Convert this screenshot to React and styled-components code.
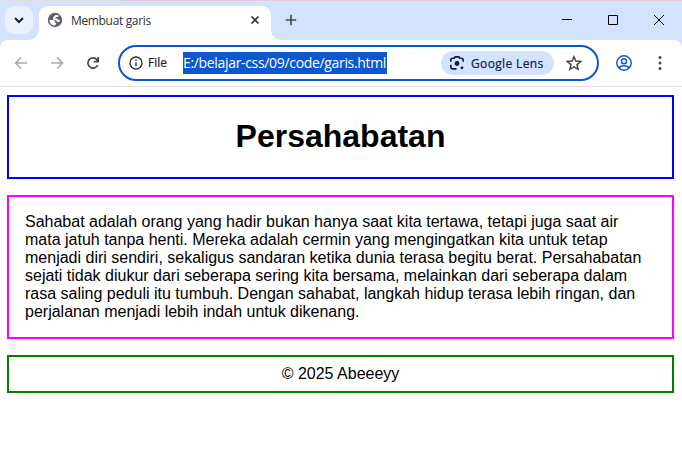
import React from "react";
import styled, { createGlobalStyle } from "styled-components";

const GlobalStyle = createGlobalStyle`
  * { box-sizing: border-box; }
  html, body { margin: 0; background: #fff; overflow: hidden; }
`;

const Window = styled.div`
  width: 682px;
  height: 471px;
  display: flex;
  flex-direction: column;
  background: #fff;
  font-family: "Open Sans", "Noto Sans", sans-serif;
`;

const TopEdge = styled.div`
  height: 1px;
  flex: none;
  background: linear-gradient(90deg, #dedfe3 120px, #e7c9df 120px);
`;

const TabStrip = styled.div`
  height: 39px;
  flex: none;
  display: flex;
  padding: 5px 0 0 5px;
  background: #d3e3fd;
`;

const TabSearch = styled.div`
  width: 28px;
  height: 28px;
  border-radius: 9px;
  background: #e9f1fe;
  display: flex;
  svg { margin: auto; }
`;

const Tab = styled.div`
  position: relative;
  width: 232px;
  height: 34px;
  margin-left: 6px;
  padding: 0 11px 6px 8px;
  display: flex;
  align-items: center;
  background: #fff;
  border-radius: 9px 9px 0 0;
  &::before, &::after {
    content: "";
    position: absolute;
    bottom: 0;
    width: 10px;
    height: 10px;
  }
  &::before {
    left: -10px;
    background: radial-gradient(circle at 0 0, transparent 9.5px, #fff 10px);
  }
  &::after {
    right: -10px;
    background: radial-gradient(circle at 100% 0, transparent 9.5px, #fff 10px);
  }
`;

const TabTitle = styled.span`
  flex: 1;
  margin-left: 8px;
  padding-top: 1px;
  font-size: 12px;
  line-height: 16px;
  letter-spacing: -0.34px;
  color: #303236;
  white-space: nowrap;
`;

const NewTab = styled.div`
  width: 28px;
  height: 28px;
  margin-left: 6px;
  display: flex;
  svg { margin: auto; }
`;

const WindowControls = styled.div`
  margin-left: auto;
  height: 28px;
  display: flex;
`;

const WindowControl = styled.div`
  width: 46px;
  display: flex;
  svg { margin: auto; }
`;

const ToolbarBack = styled.div`
  height: 47px;
  flex: none;
  background: linear-gradient(#d3e3fd 20px, #fff 20px);
`;

const Toolbar = styled.div`
  height: 47px;
  display: flex;
  align-items: center;
  background: #fff;
  border-bottom: 1px solid #dfe1e5;
  border-radius: 8px 8px 0 0;
`;

const NavButton = styled.div`
  width: 36px;
  height: 28px;
  display: flex;
  color: ${(p) => (p.$disabled ? "#a8a9aa" : "#474747")};
  svg { margin: auto; }
  &:first-child { margin-left: 3px; }
`;

const AddressBar = styled.div`
  width: 481px;
  height: 36px;
  margin-left: 7px;
  padding: 0 0 0 9px;
  display: flex;
  align-items: center;
  border: 2px solid #0b57d0;
  border-radius: 18px;
`;

const Scheme = styled.span`
  width: 35px;
  margin-left: 5px;
  font-size: 12px;
  line-height: 16px;
  font-weight: 500;
  -webkit-text-stroke: 0.2px #1f1f1f;
  color: #1f1f1f;
`;

const Url = styled.span`
  height: 22px;
  line-height: 22px;
  background: #0b57d0;
  color: #fff;
  font-size: 14px;
  letter-spacing: -0.33px;
  width: 204px;
  white-space: nowrap;
`;

const LensChip = styled.div`
  width: 113px;
  height: 24px;
  margin-left: auto;
  padding-left: 8px;
  display: flex;
  align-items: center;
  gap: 6px;
  background: #d3e3fd;
  border-radius: 12px;
  color: #041e49;
  font-size: 12px;
  font-weight: 500;
  -webkit-text-stroke: 0.2px #041e49;
  letter-spacing: 0.36px;
  white-space: nowrap;
`;

const StarButton = styled.div`
  width: 24px;
  margin-left: 8px;
  margin-right: 11px;
  display: flex;
  svg { margin: auto; }
`;

const ProfileButton = styled.div`
  width: 36px;
  margin-left: 7px;
  display: flex;
  svg { margin: auto; }
`;

const Page = styled.main`
  padding: 8px 8px 0 7px;
  font-family: "Liberation Sans", Arial, sans-serif;
  font-size: 16px;
  line-height: 18px;
  color: #000;
  display: flex;
  flex-direction: column;
  gap: 16px;
`;

const Header = styled.header`
  height: 84px;
  padding-bottom: 2px;
  border: 2px solid #00f;
  display: flex;
  align-items: center;
  justify-content: center;
`;

const Title = styled.h1`
  margin: 0;
  font-size: 32px;
  line-height: 36px;
`;

const Article = styled.section`
  height: 144px;
  padding: 16px;
  border: 2px solid #f0f;
`;

const Line = styled.span`
  display: block;
  white-space: nowrap;
`;

const Footer = styled.footer`
  height: 38px;
  padding: 8px 0;
  border: 2px solid green;
  text-align: center;
`;

const lines = [
  "Sahabat adalah orang yang hadir bukan hanya saat kita tertawa, tetapi juga saat air",
  "mata jatuh tanpa henti. Mereka adalah cermin yang mengingatkan kita untuk tetap",
  "menjadi diri sendiri, sekaligus sandaran ketika dunia terasa begitu berat. Persahabatan",
  "sejati tidak diukur dari seberapa sering kita bersama, melainkan dari seberapa dalam",
  "rasa saling peduli itu tumbuh. Dengan sahabat, langkah hidup terasa lebih ringan, dan",
  "perjalanan menjadi lebih indah untuk dikenang.",
];

const Icon = ({ size = 16, box = 16, sw = 1.5, color = "currentColor", children }) => (
  <svg width={size} height={size} viewBox={`0 0 ${box} ${box}`} fill="none" stroke={color} strokeWidth={sw}>
    {children}
  </svg>
);

export default function App() {
  return (
    <Window>
      <GlobalStyle />
      <TopEdge />
      <TabStrip>
        <TabSearch>
          <Icon size={10} box={10} sw={2} color="#1f1f1f"><path d="M1 3 5 7l4-4" /></Icon>
        </TabSearch>
        <Tab>
          <Icon color="#5f6368">
            <circle cx="8" cy="8" r="7.200" fill="#5f6368" stroke="none" />
            <path fill="#fff" stroke="none" d="M2.400 8h3.400c1.200 0 2.100.9 2.100 2.100v.7h1.300v1.300l-1.500 1.500C4.700 13.500 2.400 11 2.400 8Z" />
            <path stroke="#fff" strokeWidth="1.900" strokeLinejoin="round" d="M11.300 4H8.900L7.200 5.600v1.700h2.300l1.200 1.500h2" />
          </Icon>
          <TabTitle>Membuat garis</TabTitle>
          <Icon size={10} box={10} sw={1.7} color="#303236"><path d="m1.500 1.500 7 7m0-7-7 7" /></Icon>
        </Tab>
        <NewTab>
          <Icon size={12} box={12} sw={1.6} color="#474747"><path d="M6 .8v10.400M.8 6h10.400" /></Icon>
        </NewTab>
        <WindowControls>
          <WindowControl><Icon size={10} box={10} sw={1} color="#000"><path d="M0 4.500h10" /></Icon></WindowControl>
          <WindowControl><Icon size={10} box={10} sw={1} color="#000"><path d="M.5.5h9v9h-9z" /></Icon></WindowControl>
          <WindowControl><Icon size={10} box={10} sw={1} color="#000"><path d="m0 0 10 10M10 0 0 10" /></Icon></WindowControl>
        </WindowControls>
      </TabStrip>
      <ToolbarBack>
        <Toolbar>
          <NavButton $disabled><Icon><path d="M14 8H3M8 2.500 2.500 8 8 13.500" /></Icon></NavButton>
          <NavButton $disabled><Icon><path d="M2 8h11M8 2.500 13.500 8 8 13.500" /></Icon></NavButton>
          <NavButton>
            <Icon sw={1.7}><path d="M12.700 10A5.100 5.100 0 1 1 12 4.800L13 6M13.200 2v4.600H8.800" /></Icon>
          </NavButton>
          <AddressBar>
            <Icon size={14} box={14} sw={1.4} color="#303236"><circle cx="7" cy="7" r="6" /><path d="M7 6.200v4M7 3.600V5" /></Icon>
            <Scheme>File</Scheme>
            <Url>E:/belajar-css/09/code/garis.html</Url>
            <LensChip>
              <Icon color="#041e49" sw={1.600}>
                <path d="M1.800 6.800V5.200c0-1.200.8-2 2-2h1.500l.8-1.300h3.800l.8 1.300h1.500c1.200 0 2 .8 2 2v1.600M1.800 9.800v2c0 1.300.8 2.100 2.100 2.100h3.600" />
                <circle cx="8" cy="8.500" r="2.400" fill="#041e49" stroke="none" />
                <circle cx="13" cy="12.800" r="1.400" fill="#041e49" stroke="none" />
              </Icon>
              <span>Google Lens</span>
            </LensChip>
            <StarButton>
              <Icon color="#474747" sw={1.500}>
                <path d="m8 1.700 1.850 4.400 4.850.4L11 9.600l1.150 4.700L8 11.800l-4.150 2.500L5 9.600 1.300 6.500l4.850-.4Z" />
              </Icon>
            </StarButton>
          </AddressBar>
          <ProfileButton>
            <Icon color="#0b57d0" sw={1.500}>
              <circle cx="8" cy="8" r="7.200" /><circle cx="8" cy="6.300" r="2.500" /><path d="M2.800 12.700C4.200 11.300 6 10.700 8 10.700s3.800.6 5.200 2" />
            </Icon>
          </ProfileButton>
          <NavButton>
            <Icon><g fill="currentColor" stroke="none"><circle cx="8" cy="2.500" r="1.500" /><circle cx="8" cy="8" r="1.500" /><circle cx="8" cy="13.500" r="1.500" /></g></Icon>
          </NavButton>
        </Toolbar>
      </ToolbarBack>
      <Page>
        <Header><Title>Persahabatan</Title></Header>
        <Article>{lines.map((line) => <Line key={line}>{line}</Line>)}</Article>
        <Footer>© 2025 Abeeeyy</Footer>
      </Page>
    </Window>
  );
}
